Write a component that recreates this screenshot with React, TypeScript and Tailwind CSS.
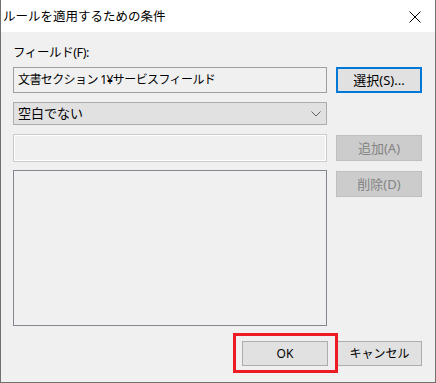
import React from 'react'

const font = { fontFamily: "'Noto Sans', 'Noto Sans CJK JP', sans-serif" }

function CloseIcon() {
  return (
    <svg width="12" height="12" viewBox="0 0 12 12" className="block">
      <path d="M0.5 0.5 L11.5 11.5 M11.5 0.5 L0.5 11.5" stroke="#000" strokeWidth="1" fill="none" />
    </svg>
  )
}

function Chevron() {
  return (
    <svg width="10" height="6" viewBox="0 0 10 6" className="block">
      <path d="M0.5 0.5 L5 5 L9.5 0.5" stroke="#606060" strokeWidth="1" fill="none" />
    </svg>
  )
}

function Button({ label, disabled, focused }: { label: string; disabled?: boolean; focused?: boolean }) {
  const base = 'flex w-[86px] h-[26px] shrink-0 items-center justify-center text-[13px] leading-none'
  if (disabled) return <div className={`${base} bg-[#cccccc] border border-[#bfbfbf] text-[#838383]`}>{label}</div>
  if (focused) return <div className={`${base} bg-[#e1e1e1] border-2 border-[#0078d7] text-black`}>{label}</div>
  return <div className={`${base} bg-[#e1e1e1] border border-[#adadad] text-black`}>{label}</div>
}

export default function App() {
  return (
    <div className="w-[436px] h-[383px] flex flex-col bg-[#f0f0f0] border-x border-b border-[#707070] text-black" style={font}>
      {/* title bar */}
      <div className="h-[32px] shrink-0 bg-white flex items-center pl-[2px] pr-[14px] pt-[2px]">
        <span className="flex-1 text-[12.5px] leading-none">ルールを適用するための条件</span>
        <CloseIcon />
      </div>

      <div className="flex-1 flex flex-col pl-[12px] pr-[13px] pt-[13px]">
        <div className="h-[16px] mb-[6px] text-[12.5px] leading-[16px] tracking-[-0.4px]">フィールド(F):</div>

        <div className="flex gap-[9px]">
          <div className="w-[314px] h-[26px] border border-[#a0a0a0] bg-[#f0f0f0] flex items-center pl-[4px] text-[12px] leading-none tracking-[-0.6px]">
            文書セクション 1¥サービスフィールド
          </div>
          <Button label="選択(S)..." focused />
        </div>

        <div className="mt-[9px] w-[314px] h-[23px] border border-[#adadad] bg-[#e1e1e1] flex items-center pl-[4px] pr-[5px] text-[13px] leading-none">
          <span className="flex-1">空白でない</span>
          <Chevron />
        </div>

        <div className="mt-[9px] flex gap-[9px] items-start">
          <div className="w-[314px] h-[28px] border border-[#cccccc] bg-[#f0f0f0] shadow-[inset_0_0_0_1px_#ffffff]" />
          <div className="mt-[1px]"><Button label="追加(A)" disabled /></div>
        </div>

        <div className="mt-[8px] flex gap-[9px] items-start">
          <div className="w-[314px] h-[156px] border border-[#828790] bg-[#f0f0f0]" />
          <div className="mt-[1px]"><Button label="削除(D)" disabled /></div>
        </div>

        <div className="mt-[15px] flex justify-end gap-[9px]">
          <div className="relative">
            <div className="flex w-[86px] h-[25px] items-center justify-center bg-[#e1e1e1] border border-[#adadad] text-[12px] leading-none">OK</div>
            <div className="absolute -left-[9px] -right-[10px] -top-[8px] -bottom-[7px] border-[3px] border-[#ed1c24]" />
          </div>
          <div className="flex w-[85px] h-[25px] items-center justify-center bg-[#e1e1e1] border border-[#adadad] text-[12px] leading-none">キャンセル</div>
        </div>
      </div>
    </div>
  )
}
